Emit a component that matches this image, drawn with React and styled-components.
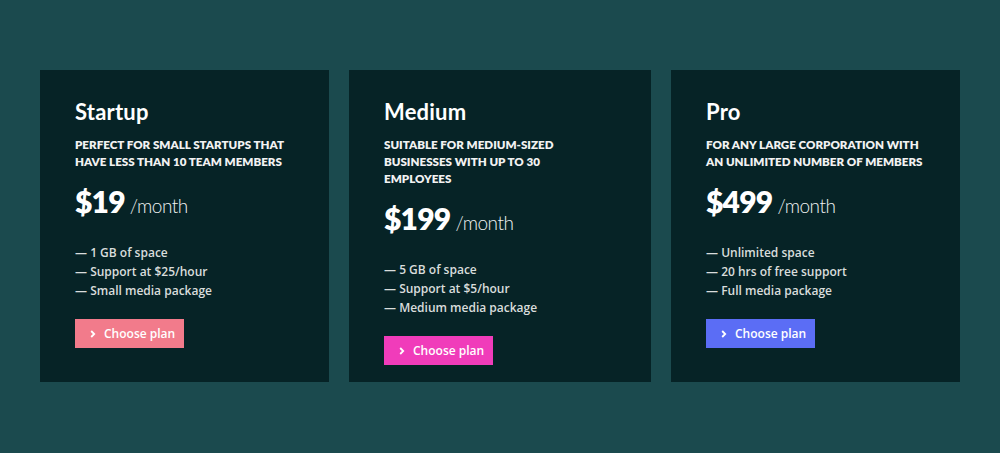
import React from 'react';
import styled, { createGlobalStyle } from 'styled-components';

const GlobalStyle = createGlobalStyle`
    html, body {
        margin: 0;
        padding: 0;
        background-color: #1b4a4e;
    }
    body {
        font-family: "Open Sans", "Liberation Sans", sans-serif;
    }
`;

const Page = styled.div`
    width: 1000px;
    height: 453px;
    box-sizing: border-box;
    padding: 70px 40px 0;
    display: grid;
    grid-template-columns: 289px 302px 289px;
    grid-template-rows: 312px;
    column-gap: 20px;
`;

const Card = styled.div`
    background-color: #062326;
    padding: 26px 35px 17px;
    display: flex;
    flex-direction: column;
    align-items: flex-start;

    & > * {
        flex-shrink: 0;
    }
`;

const Title = styled.h2`
    margin: 0;
    font-family: Lato, "Liberation Sans", sans-serif;
    font-weight: 700;
    font-size: 22px;
    line-height: 32px;
    color: #ffffff;
    letter-spacing: 0.2px;
`;

const Subtitle = styled.p`
    margin: 8px 0 0;
    font-family: Lato, "Liberation Sans", sans-serif;
    font-weight: 800;
    font-size: 11.6px;
    line-height: 17px;
    text-transform: uppercase;
    white-space: nowrap;
    color: #f2f2f2;
`;

const Price = styled.div`
    margin-top: 13px;
    display: flex;
    align-items: baseline;
    color: #ffffff;
    font-family: Lato, "Liberation Sans", sans-serif;
`;

const Amount = styled.span`
    font-weight: 800;
    font-size: 30px;
    line-height: 36px;
    letter-spacing: -0.8px;
`;

const Period = styled.span`
    margin-left: 5px;
    font-weight: 300;
    font-size: 19px;
    letter-spacing: -0.5px;
    color: #f0f2f2;
`;

const Features = styled.ul`
    list-style: none;
    margin: 24px 0 0;
    padding: 0;
`;

const Feature = styled.li`
    font-size: 12px;
    font-weight: 600;
    line-height: 19px;
    color: #d9dddc;
`;

const Button = styled.button`
    margin-top: 19px;
    height: 29px;
    width: 109px;
    border: none;
    padding: 0 0 0 15px;
    display: flex;
    align-items: center;
    gap: 8px;
    background-color: ${p => p.$color};
    color: #ffffff;
    font-family: "Open Sans", "Liberation Sans", sans-serif;
    font-size: 12px;
    font-weight: 600;
    cursor: pointer;
`;

const Chevron = styled.svg`
    width: 6px;
    height: 8px;
`;

const plans = [
    {
        name: 'Startup',
        lines: ['Perfect for small startups that', 'have less than 10 team members'],
        price: '$19',
        features: ['1 GB of space', 'Support at $25/hour', 'Small media package'],
        color: '#f27b8b',
    },
    {
        name: 'Medium',
        lines: ['Suitable for medium-sized', 'businesses with up to 30', 'employees'],
        price: '$199',
        features: ['5 GB of space', 'Support at $5/hour', 'Medium media package'],
        color: '#f03cba',
    },
    {
        name: 'Pro',
        lines: ['For any large corporation with', 'an unlimited number of members'],
        price: '$499',
        features: ['Unlimited space', '20 hrs of free support', 'Full media package'],
        color: '#5b6df5',
    },
];

const App = () => (
    <>
        <GlobalStyle />
        <Page>
            {plans.map(plan => (
                <Card key={plan.name}>
                    <Title>{plan.name}</Title>
                    <Subtitle>
                        {plan.lines.map((l, i) => (
                            <React.Fragment key={i}>{i > 0 && <br />}{l}</React.Fragment>
                        ))}
                    </Subtitle>
                    <Price>
                        <Amount>{plan.price}</Amount>
                        <Period>/month</Period>
                    </Price>
                    <Features>
                        {plan.features.map(f => <Feature key={f}>— {f}</Feature>)}
                    </Features>
                    <Button $color={plan.color}>
                        <Chevron viewBox="0 0 6 8">
                            <path d="M1.2 1 L4.2 4 L1.2 7" stroke="#fff" strokeWidth="1.8" fill="none" />
                        </Chevron>
                        Choose plan
                    </Button>
                </Card>
            ))}
        </Page>
    </>
);

export default App;
